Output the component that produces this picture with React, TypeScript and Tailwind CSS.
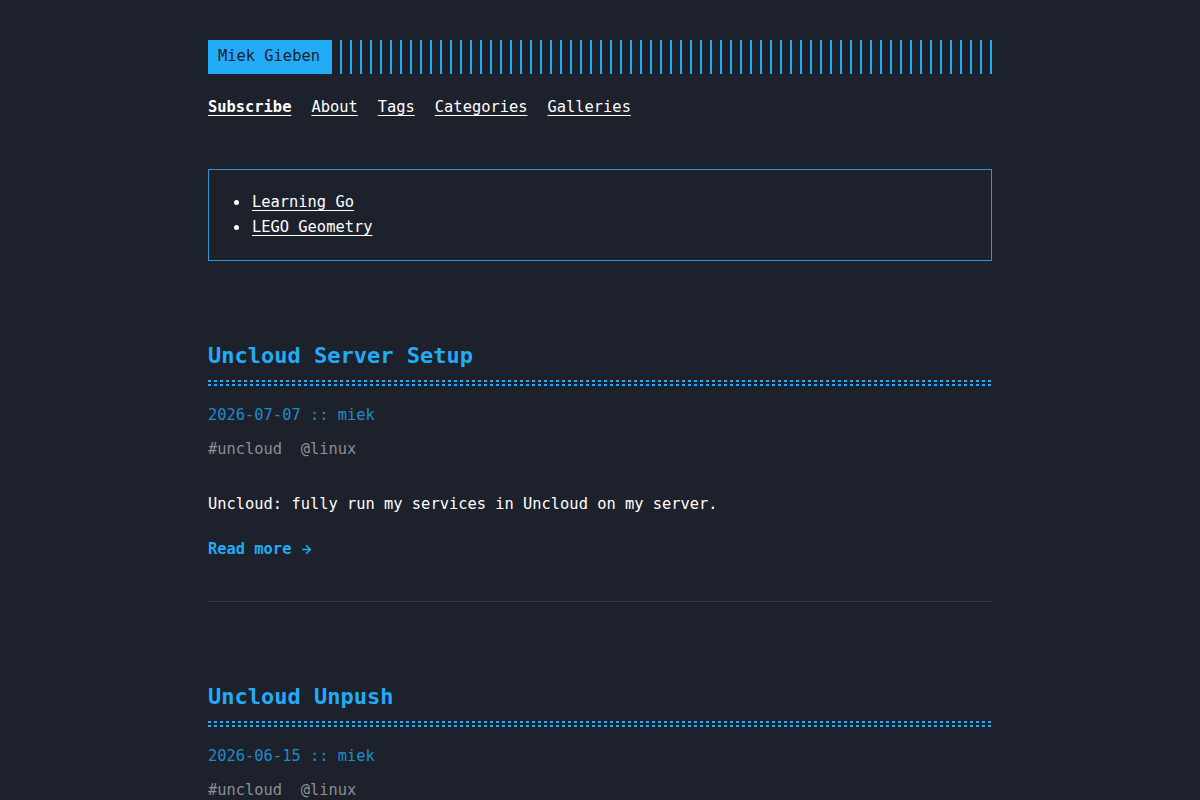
import { ArrowRight } from "lucide-react";

const posts = [
  {
    title: "Uncloud Server Setup",
    date: "2026-07-07",
    author: "miek",
    tags: ["#uncloud", "@linux"],
    summary: "Uncloud: fully run my services in Uncloud on my server.",
  },
  {
    title: "Uncloud Unpush",
    date: "2026-06-15",
    author: "miek",
    tags: ["#uncloud", "@linux"],
    summary: "Uncloud: push images straight to the machines.",
  },
];

const Header = () => (
  <header>
    <div className="flex items-center gap-[8px]">
      <a className="flex h-[34px] w-[124px] items-center bg-[#22abf6] px-[10px] text-[#1d212c]">Miek Gieben</a>
      <div className="h-[34px] flex-1 bg-[repeating-linear-gradient(90deg,#22abf6_0_2px,transparent_2px_10px)]" />
    </div>
    <nav className="mt-[21px] flex gap-[20px] leading-[25px]">
      <a className="font-bold underline underline-offset-[3px]">Subscribe</a>
      <a className="underline underline-offset-[3px]">About</a>
      <a className="underline underline-offset-[3px]">Tags</a>
      <a className="underline underline-offset-[3px]">Categories</a>
      <a className="underline underline-offset-[3px]">Galleries</a>
    </nav>
  </header>
);

const Post = ({ post }: { post: (typeof posts)[number] }) => (
  <article className="pt-[81px]">
    <h2 className="text-[22px] font-bold leading-[28px] text-[#22abf6]">{post.title}</h2>
    {/* double dotted rule under the title */}
    <div className="mt-[10px] flex flex-col gap-[2px]">
      <div className="h-[2px] bg-[repeating-linear-gradient(90deg,#22abf6_0_3px,transparent_3px_6px)]" />
      <div className="h-[2px] bg-[repeating-linear-gradient(90deg,#22abf6_0_3px,transparent_3px_6px)]" />
    </div>
    <div className="mt-[17px] leading-[25px] text-[#1f8bc9]">
      {post.date} :: {post.author}
    </div>
    <div className="mt-[9px] flex gap-[18.5px] leading-[25px] text-[#8b8e96]">
      {post.tags.map((t) => (
        <span key={t}>{t}</span>
      ))}
    </div>
    <p className="mt-[30px] leading-[25px]">{post.summary}</p>
    <a className="mt-[20px] flex items-center gap-[9px] font-bold leading-[25px] text-[#22abf6]">
      Read more
      <ArrowRight size={13} strokeWidth={3} />
    </a>
    <hr className="mt-[39px] border-0 border-t border-[#33363f]" />
  </article>
);

export default function App() {
  return (
    <div className="min-h-screen bg-[#1d212c] font-['DejaVu_Sans_Mono',monospace] text-[15.4px] text-white">
      <div className="mx-auto max-w-[784px] pt-[40px] pb-[40px]">
        <Header />
        <div className="mt-[49px] border border-[#2f96d6] pt-[20px] pb-[20px] pl-[25px]">
          <ul className="flex flex-col leading-[25px]">
            {["Learning Go", "LEGO Geometry"].map((s) => (
              <li key={s} className="flex items-center gap-[13px]">
                <span className="h-[5px] w-[5px] rounded-full bg-white" />
                <a className="underline underline-offset-[3px]">{s}</a>
              </li>
            ))}
          </ul>
        </div>
        {posts.map((p) => (
          <Post key={p.title} post={p} />
        ))}
      </div>
    </div>
  );
}
